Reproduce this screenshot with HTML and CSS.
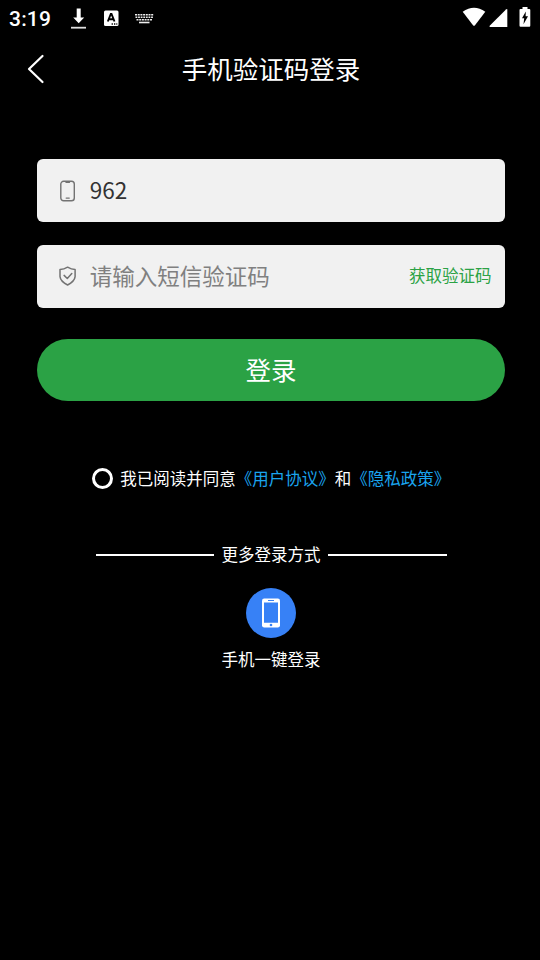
FILE: index.html
```html
<!DOCTYPE html>
<html lang="zh-CN">
<head>
<meta charset="utf-8">
<meta name="viewport" content="width=device-width, initial-scale=1">
<title>手机验证码登录</title>
<link rel="stylesheet" href="styles.css">
</head>
<body>
<div class="status">
  <span class="time">3:19</span>
  <svg class="st-download" width="16" height="22" viewBox="0 0 16 22"><path fill="#fff" d="M5.700 0.500h4v9h3.500L7.700 15.300 2.200 9.500H5.700z"/><path fill="#ddd" d="M0 18.800h15v1.800H0z"/></svg>
  <svg class="st-lang" width="16" height="18" viewBox="0 0 16 18"><rect x="1" y="1.500" width="14.500" height="15.500" rx="1.500" fill="#fff"/><path d="M4.800 12.500 7.800 5h.7l3 7.500M5.800 10.300h4.800" fill="none" stroke="#000" stroke-width="1.900"/><path d="M8.600 15h1.300M11 15h1.300M13.300 15h1" stroke="#000" stroke-width="1.300"/></svg>
  <svg class="st-keyboard" width="20" height="12" viewBox="0 0 20 12"><g stroke="#eee" stroke-width="1.600" fill="none"><path stroke-dasharray="2 .7" d="M0 1.800h18.300M1.500 6.800h15.800"/><path stroke-dasharray="1.800 .8" d="M.5 4.300h17.800"/><path d="M4 9.500h10.500"/></g></svg>
  <div class="status-right">
    <svg width="24" height="20" viewBox="0 0 24 20"><path fill="#fff" d="M.7 4.800Q12-3.300 23.300 4.800L13 18.200q-1 1-2 0z"/></svg>
    <svg class="st-signal" width="19" height="20" viewBox="0 0 19 20"><path fill="#fff" d="M18.300 1.300V19H1q-1-.3-.3-1.200L17 1.500q1-.8 1.300-.2z"/></svg>
    <svg class="st-battery" width="12" height="22" viewBox="0 0 12 22"><path fill="#fff" d="M3.500 1h5v2h1.800q1 0 1 1v15.500q0 1.200-1 1.200H1.500q-1 0-1-1.200V4q0-1 1-1h2z"/><path fill="#000" d="M6.800 5.500 3 12.200H5.200l-.7 6 4.500-8H6.600z"/></svg>
  </div>
</div>
<header class="header">
  <svg class="back" width="18" height="30" viewBox="0 0 18 30"><path d="M15.500 2 2 15l13.500 13" fill="none" stroke="#fff" stroke-width="2.200" stroke-linecap="round" stroke-linejoin="round"/></svg>
  <h1 class="title">手机验证码登录</h1>
</header>
<main class="main">
  <div class="field">
    <svg class="field-icon" width="18" height="22" viewBox="0 0 18 22"><g fill="none" stroke="#737373" stroke-width="1.400" stroke-linecap="round"><rect x="1.800" y="1.300" width="13.500" height="19.500" rx="2.800"/><path d="M7 2.300h3.500M7.200 18.100h3"/></g></svg>
    <span class="value">962</span>
  </div>
  <div class="field">
    <svg class="field-icon" width="18" height="22" viewBox="0 0 18 22"><g fill="none" stroke="#737373" stroke-width="1.500" stroke-linecap="round" stroke-linejoin="round"><path d="M8.600 1.200Q5 3.500 1 3.500V10.700Q1.500 15.500 8.600 19 15.600 15.500 16.100 10.700V3.500Q12.300 3.500 8.600 1.200z"/><path d="m5.100 9.400 3.200 3.100 4.500-5"/></g></svg>
    <span class="placeholder">请输入短信验证码</span>
    <span class="get-code">获取验证码</span>
  </div>
  <div class="login">登录</div>
  <div class="agree">
    <span class="radio"></span>
    <span class="agree-text">我已阅读并同意<a class="link">《用户协议》</a>和<a class="link">《隐私政策》</a></span>
  </div>
  <div class="more"><span class="line"></span><span class="more-text">更多登录方式</span><span class="line"></span></div>
  <div class="quick">
    <div class="quick-icon"><svg width="20" height="30" viewBox="0 0 20 30"><rect x="1" y="0.500" width="18" height="29" rx="2.200" fill="#fff"/><path fill="#3781f6" d="M3 4.500h14v20.200H3zM7 2h6v1H7z"/><circle cx="10" cy="27" r="1.300" fill="#3781f6"/></svg></div>
    <span>手机一键登录</span>
  </div>
</main>
</body>
</html>
```
FILE: styles.css
```css
* { box-sizing: border-box; }
body {
  margin: 0;
  min-height: 960px;
  background: #000;
  color: #fff;
  font-family: "Noto Sans CJK SC", sans-serif;
  font-size: 16.5px;
}
svg { display: block; flex: none; }
.status {
  display: flex;
  align-items: center;
  height: 36px;
  padding: 0 9px;
}
.time {
  width: 62px;
  padding-top: 1px;
  font: 500 21px/24px Roboto, sans-serif;
  letter-spacing: .2px;
}
.st-download { margin-top: 1px; }
.st-lang { margin-left: 16px; }
.st-keyboard { margin-left: 16px; margin-top: 1px; }
.status-right {
  display: flex;
  align-items: center;
  margin: -2px 0 0 auto;
}
.st-signal { margin: 2px 0 0 3px; }
.st-battery { margin-left: 11px; }
.header {
  display: grid;
  grid-template-columns: 44px 1fr 44px;
  align-items: center;
  height: 66px;
}
.back { margin-left: 27px; }
.title {
  margin: -2px -20px 0;
  padding-left: 2px;
  font-size: 25.5px;
  font-weight: 400;
  line-height: 36px;
  text-align: center;
}
.main {
  display: flex;
  flex-direction: column;
  padding: 57px 35px 0 37px;
}
.field {
  display: flex;
  align-items: center;
  height: 63px;
  margin-bottom: 23px;
  padding: 0 13.5px 0 22px;
  border-radius: 6px;
  background: #f1f1f1;
  color: #333;
  font-size: 22.5px;
}
.field-icon { margin-right: 12.7px; }
.value { padding-bottom: 4px; }
.placeholder { padding-bottom: 3px; color: #808080; }
.get-code {
  margin-left: auto;
  padding-bottom: 3px;
  color: #2ba245;
  font-size: 16.5px;
}
.login {
  height: 62px;
  margin-top: 8px;
  border-radius: 31px;
  background: #2ba245;
  font-size: 25.5px;
  line-height: 60px;
  text-align: center;
}
.agree {
  display: flex;
  align-items: center;
  height: 24px;
  margin: 65px 0 0 55px;
  white-space: nowrap;
}
.radio {
  width: 21px;
  height: 21px;
  margin-right: 7.2px;
  border: 3px solid #fff;
  border-radius: 50%;
}
.link { color: #1aa4ee; }
.more {
  display: flex;
  align-items: center;
  justify-content: space-between;
  height: 24px;
  margin: 53px 58px 0 59px;
}
.more-text { padding-bottom: 2px; }
.line {
  width: 118px;
  height: 2px;
  background: #fff;
}
.line:last-child { width: 119px; }
.quick {
  display: flex;
  flex-direction: column;
  align-items: center;
  margin-top: 21px;
  line-height: 24px;
}
.quick-icon {
  display: grid;
  place-items: center;
  width: 50px;
  height: 50px;
  margin-bottom: 9px;
  border-radius: 50%;
  background: #3781f6;
}
```
